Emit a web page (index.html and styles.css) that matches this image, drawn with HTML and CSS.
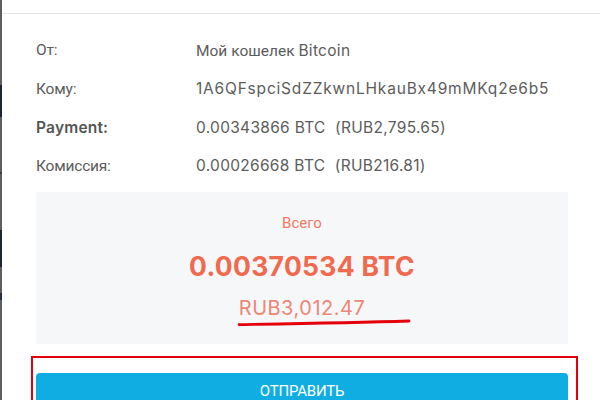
FILE: index.html
```html
<!DOCTYPE html>
<html lang="ru">
<head>
<meta charset="utf-8">
<title>Подтверждение платежа</title>
<link rel="stylesheet" href="styles.css">
</head>
<body>
<div class="strip"></div>
<main class="panel">
  <div class="topbar"></div>
  <div class="content">
    <div class="details">
      <div class="label">От:</div>
      <div class="value">Мой кошелек <span class="latin">Bitcoin</span></div>
      <div class="label">Кому:</div>
      <div class="value latin address">1A6QFspciSdZZkwnLHkauBx49mMKq2e6b5</div>
      <div class="label latin strong">Payment:</div>
      <div class="value latin">0.00343866 BTC&nbsp; (RUB2,795.65)</div>
      <div class="label">Комиссия:</div>
      <div class="value latin">0.00026668 BTC&nbsp; (RUB216.81)</div>
    </div>
    <section class="total">
      <div class="total-label">Всего</div>
      <div class="total-btc">0.00370534 BTC</div>
      <div class="total-rub">RUB3,012.47</div>
      <svg class="scribble" width="180" height="12" viewBox="0 0 180 12">
        <path d="M3 8.6 C 50 7.8, 115 6.8, 173 5" fill="none" stroke="#e3000b" stroke-width="2.8" stroke-linecap="round"/>
      </svg>
    </section>
    <button class="send">ОТПРАВИТЬ</button>
  </div>
  <div class="highlight"></div>
</main>
</body>
</html>
```
FILE: styles.css
```css
html, body {
  margin: 0;
  padding: 0;
  height: 400px;
  overflow: hidden;
  background: #ffffff;
}
body {
  display: flex;
  font-family: Roboto, "Noto Sans", sans-serif;
}
.strip {
  width: 2px;
  flex: none;
  background: linear-gradient(to bottom,
    #5e5e5e 0, #5e5e5e 85px,
    #1c2633 85px, #1c2633 117px,
    #5e5e5e 117px, #5e5e5e 172px,
    #3a3a3a 172px, #3a3a3a 174px,
    #5e5e5e 174px, #5e5e5e 230px,
    #1c2633 230px, #1c2633 267px,
    #5e5e5e 267px, #5e5e5e 293px,
    #24303c 293px, #24303c 300px,
    #5e5e5e 300px);
}
.panel {
  flex: 1;
  position: relative;
  background: #ffffff;
}
.topbar {
  height: 13px;
  border-bottom: 1px solid #e6e6e6;
}
.content {
  padding: 17px 32px 0 34px;
}
.details {
  display: grid;
  grid-template-columns: 160px 1fr;
  grid-auto-rows: 38.5px;
  align-items: center;
  color: #5a5a5a;
}
.label {
  font-family: Roboto, sans-serif;
  font-size: 15.5px;
  color: #5c5c5c;
  letter-spacing: -0.2px;
}
.value {
  font-family: Roboto, sans-serif;
  font-size: 15.5px;
  color: #5c5c5c;
}
.latin {
  font-family: Inter, "DejaVu Sans", sans-serif;
  font-size: 15.5px;
  letter-spacing: 0.3px;
}
.address {
  letter-spacing: 0.8px;
}
.strong {
  font-weight: 600;
  color: #555555;
  letter-spacing: 0.2px;
}
.total {
  position: relative;
  margin-top: 7px;
  height: 152px;
  box-sizing: border-box;
  background: #f6f7f9;
  padding-top: 21px;
  display: flex;
  flex-direction: column;
  align-items: center;
}
.total-label {
  font-family: Roboto, sans-serif;
  font-size: 15px;
  line-height: 20px;
  color: #ef7a63;
}
.total-btc {
  margin-top: 17px;
  font-family: Inter, sans-serif;
  font-weight: 700;
  font-size: 26.5px;
  line-height: 32px;
  color: #ef6a4f;
  letter-spacing: 0.3px;
}
.total-rub {
  margin-top: 14px;
  font-family: Inter, sans-serif;
  font-size: 20px;
  line-height: 24px;
  color: #ec8675;
  letter-spacing: 0.5px;
}
.scribble {
  position: absolute;
  left: 200px;
  top: 124px;
}
.send {
  display: block;
  width: 100%;
  height: 40px;
  margin-top: 29px;
  border: none;
  border-radius: 4px;
  background: #10ade3;
  color: #ffffff;
  font-family: Roboto, sans-serif;
  font-size: 15px;
  line-height: 36px;
  padding: 0 0 4px;
  letter-spacing: -0.2px;
}
.highlight {
  position: absolute;
  left: 29px;
  top: 356px;
  width: 543px;
  height: 60px;
  border: 2.5px solid #e3000b;
  pointer-events: none;
}
```
